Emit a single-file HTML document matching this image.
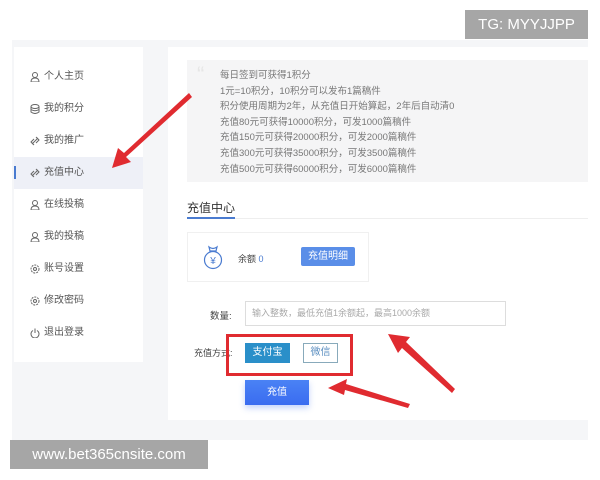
<!DOCTYPE html><html><head><meta charset="utf-8"><style>
*{margin:0;padding:0;box-sizing:border-box}
body{width:600px;height:480px;background:#fff;position:relative;overflow:hidden;font-family:"Liberation Sans","Noto Sans CJK SC",sans-serif;color:#555}
.a{position:absolute}
.cn{font-size:10px;color:#666}
.nav div{position:absolute;left:0;width:129px;height:32px;line-height:32px;padding-left:30px;font-size:10px;color:#555}
.nav svg{position:absolute;left:16px;top:11px}
</style></head><body>
<div class="a" style="left:12px;top:40px;width:576px;height:400px;background:#f5f6f8"></div>
<div class="a" style="left:465px;top:10px;width:123px;height:29px;background:#a6a6a6;color:#fff;font-size:15px;line-height:29px;text-align:center">TG: MYYJJPP</div>
<div class="a nav" style="left:14px;top:47px;width:129px;height:315px;background:#fff">
<div style="top:14px"><svg width="10" height="10"><circle cx="5" cy="3" r="2.5" fill="none" stroke="#666"/><path d="M1 10Q1 6 5 6Q9 6 9 10Z" fill="none" stroke="#666"/></svg>个人主页</div>
<div style="top:46px"><svg width="10" height="10"><ellipse cx="5" cy="2.5" rx="4" ry="2" fill="none" stroke="#666"/><path d="M1 2.5V8Q5 11 9 8V2.5M1 5.5Q5 8 9 5.5" fill="none" stroke="#666"/></svg>我的积分</div>
<div style="top:78px"><svg width="10" height="10"><path d="M2 8L8 2M4 9L1 6 4 3M6 1 9 4 6 7" fill="none" stroke="#666"/></svg>我的推广</div>
<div style="top:110px;background:#eef0f7"><span class="a" style="left:0;top:9px;width:2px;height:13px;background:#4a7bd0;padding:0"></span><svg width="10" height="10"><path d="M2 8L8 2M4 9L1 6 4 3M6 1 9 4 6 7" fill="none" stroke="#666"/></svg>充值中心</div>
<div style="top:142px"><svg width="10" height="10"><circle cx="5" cy="3" r="2.5" fill="none" stroke="#666"/><path d="M1 10Q1 6 5 6Q9 6 9 10Z" fill="none" stroke="#666"/></svg>在线投稿</div>
<div style="top:174px"><svg width="10" height="10"><circle cx="5" cy="3" r="2.5" fill="none" stroke="#666"/><path d="M1 10Q1 6 5 6Q9 6 9 10Z" fill="none" stroke="#666"/></svg>我的投稿</div>
<div style="top:206px"><svg width="10" height="10"><circle cx="5" cy="5" r="4" fill="none" stroke="#666" stroke-dasharray="2 1"/><circle cx="5" cy="5" r="1.5" fill="none" stroke="#666"/></svg>账号设置</div>
<div style="top:238px"><svg width="10" height="10"><circle cx="5" cy="5" r="4" fill="none" stroke="#666" stroke-dasharray="2 1"/><circle cx="5" cy="5" r="1.5" fill="none" stroke="#666"/></svg>修改密码</div>
<div style="top:270px"><svg width="10" height="10"><path d="M3 2.5A4 4 0 1 0 7 2.5M5 0.5V5" fill="none" stroke="#666"/></svg>退出登录</div>
</div>
<div class="a" style="left:168px;top:47px;width:420px;height:373px;background:#fff"></div>
<div class="a" style="left:187px;top:60px;width:401px;height:122px;background:#f5f5f6"></div>
<div class="a" style="left:197px;top:62px;font-size:22px;color:#e6e6e6">“</div>
<div class="a cn" style="left:220px;top:68px;line-height:15.6px;font-size:9.5px;color:#777">每日签到可获得1积分<br>1元=10积分，10积分可以发布1篇稿件<br>积分使用周期为2年，从充值日开始算起，2年后自动清0<br>充值80元可获得10000积分，可发1000篇稿件<br>充值150元可获得20000积分，可发2000篇稿件<br>充值300元可获得35000积分，可发3500篇稿件<br>充值500元可获得60000积分，可发6000篇稿件</div>
<div class="a" style="left:187px;top:199px;font-size:12px;color:#333">充值中心</div>
<div class="a" style="left:187px;top:218px;width:401px;height:1px;background:#eee"></div>
<div class="a" style="left:187px;top:217px;width:48px;height:2px;background:#4a7bd0"></div>
<div class="a" style="left:187px;top:232px;width:182px;height:50px;border:1px solid #f0f0f0;background:#fff"></div>
<svg class="a" style="left:202px;top:245px" width="22" height="26"><path d="M7 2Q11 5 15 2L14 6H8Z" fill="none" stroke="#4a7bd0" stroke-width="1.2"/><circle cx="11" cy="15" r="8.5" fill="none" stroke="#4a7bd0" stroke-width="1.2"/><text x="11" y="19" font-size="10" text-anchor="middle" fill="#4a7bd0" font-family="Liberation Sans">¥</text></svg>
<div class="a" style="left:238px;top:252px;font-size:9px;color:#444">余额 <span style="color:#4a7bd0">0</span></div>
<div class="a" style="left:301px;top:247px;width:54px;height:19px;background:#5a8ee8;color:#fff;font-size:10px;line-height:19px;text-align:center;border-radius:2px">充值明细</div>
<div class="a" style="left:210px;top:308px;font-size:9.5px;color:#444">数量:</div>
<div class="a" style="left:245px;top:301px;width:261px;height:25px;border:1px solid #ddd;font-size:9px;color:#aaa;line-height:23px;padding-left:6px">输入整数，最低充值1余额起，最高1000余额</div>
<div class="a" style="left:194px;top:346px;font-size:9px;color:#444">充值方式:</div>
<div class="a" style="left:226px;top:334px;width:127px;height:42px;border:3px solid #e02b30"></div>
<div class="a" style="left:245px;top:343px;width:45px;height:20px;background:#2a8fc9;color:#fff;font-size:10px;line-height:20px;text-align:center">支付宝</div>
<div class="a" style="left:303px;top:343px;width:35px;height:20px;border:1px solid #8ab;color:#5a8ec0;font-size:10px;line-height:18px;text-align:center">微信</div>
<div class="a" style="left:245px;top:380px;width:64px;height:25px;background:linear-gradient(#4a82f5,#3a6cf0);color:#fff;font-size:10px;line-height:25px;text-align:center;box-shadow:0 3px 6px rgba(60,110,240,.3)">充值</div>
<svg class="a" style="left:0;top:0" width="600" height="480"><g fill="#e02b30">
<path d="M189 93L124 153 118 148 112 168 131 162 126 157 192 97Z"/>
<path d="M455 389L406 342 410 337 388 334 398 353 402 348 452 393Z"/>
<path d="M410 404L346 384 347 379 328 388 344 395 345 390 408 408Z"/></g></svg>
<div class="a" style="left:10px;top:440px;width:198px;height:29px;background:#a6a6a6;color:#fff;font-size:15px;line-height:29px;text-align:center">www.bet365cnsite.com</div>
</body></html>
